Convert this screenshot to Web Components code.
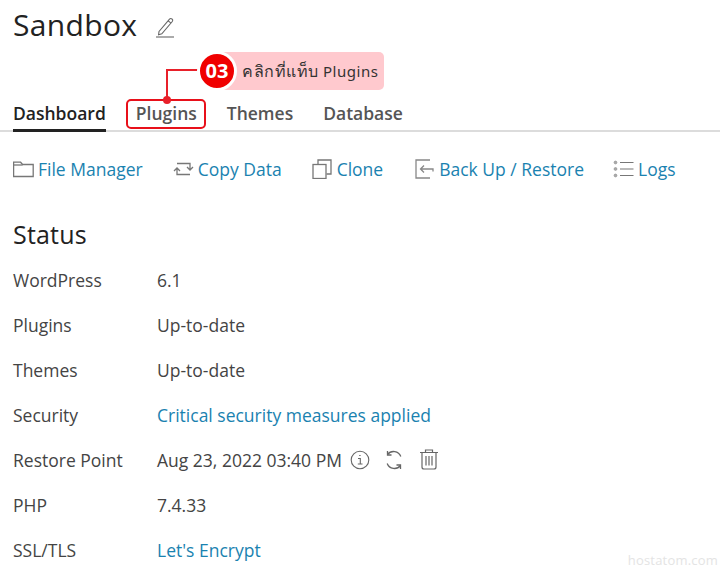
<!DOCTYPE html>
<html><head><meta charset="utf-8"><style>
html,body{margin:0;background:#fff;font-family:"Open Sans",sans-serif;color:#333}
body{width:720px;height:568px;overflow:hidden;position:relative}
</style></head><body>
<template id="t-page"><style>
:host{display:block;padding:0 0 0 13px;height:568px;box-sizing:border-box;position:relative}
.title{display:flex;align-items:center;height:50px;gap:18px}
h1{margin:0;font-size:30px;font-weight:500;line-height:50px;color:#222;letter-spacing:.35px}
.title svg{margin-top:3px}
.tabs{margin-top:44px;margin-left:-13px;padding-left:13px;height:36px;display:flex;border-bottom:2px solid #dcdcdc;box-sizing:content-box}
.toolbar{display:flex;margin-top:23px;height:28px;align-items:center}
h2{margin:34px 0 0;font-size:25px;font-weight:500;line-height:34px;color:#222;letter-spacing:.2px}
.rows{margin-top:6px}
</style>
<div class="title"><h1>Sandbox</h1><svg width="20" height="22" viewBox="0 0 20 22" fill="none" stroke="#666" stroke-width="1.100"><path d="M4 15.500 L14.500 3.200 Q15.600 2 17 3 Q18.400 4.200 17.300 5.500 L6.800 17.800 L3.600 18.800 Z M13.200 4.800 L16 7.200"/><path d="M1 21h18"/></svg></div>
<div class="tabs"><slot name="tabs"></slot></div>
<div class="toolbar"><slot name="tools"></slot></div>
<h2>Status</h2>
<div class="rows"><slot name="rows"></slot></div>
<slot></slot></template>

<template id="t-tab"><style>
:host{display:block;font-size:17.5px;font-weight:600;color:#555;line-height:38px;height:36px;margin-right:30px;box-sizing:border-box}
:host([active]){color:#222;height:38px;border-bottom:3px solid #222}
</style><slot></slot></template>

<template id="t-tool"><style>
:host{display:flex;align-items:center;font-size:17.5px;color:#1a82b0;line-height:28px;gap:4px}
::slotted(svg){display:block;flex:none}
</style><slot name="icon"></slot><slot></slot></template>

<template id="t-row"><style>
:host{display:flex;align-items:center;height:45px;font-size:17.5px;color:#444}
.l{width:144px;flex:none}.v{display:flex;align-items:center}
</style><div class="l"><slot name="label"></slot></div><div class="v"><slot></slot></div></template>

<template id="t-note"><style>
:host{position:absolute;left:0;top:0;width:720px;height:568px;display:block;pointer-events:none}
.frame{position:absolute;left:126px;top:99px;width:80px;height:30px;box-sizing:border-box;border:2px solid #e8101a;border-radius:5px}
.v{position:absolute;left:166px;top:69px;width:2px;height:30px;background:#e8202a}
.h{position:absolute;left:166px;top:69px;width:34px;height:2px;background:#e8202a}
.dot{position:absolute;left:163px;top:96px;width:8px;height:8px;border-radius:50%;background:#e8202a}
.pill{position:absolute;left:222px;top:52px;width:162px;height:38px;background:#ffc9ce;border-radius:0 5px 5px 0;box-sizing:border-box;padding-left:20px;font-family:"Noto Sans",sans-serif;font-size:15px;line-height:38px;color:#333;white-space:nowrap;letter-spacing:.55px}
.th{font-size:16px;letter-spacing:.5px}
.num{position:absolute;left:197px;top:51px;width:40px;height:40px;box-sizing:border-box;border:3px solid #fff;border-radius:50%;background:#f00000;color:#fff;font:700 20px/34px "Open Sans",sans-serif;text-align:center}
</style><div class="frame"></div><div class="v"></div><div class="h"></div><div class="dot"></div><div class="pill"><span class="th">คลิกที่แท็บ</span> Plugins</div><div class="num">03</div></template>

<template id="t-mark"><style>
:host{position:absolute;right:2px;bottom:0;font-size:13px;line-height:16px;color:#e4e4e4;letter-spacing:.2px}
</style><slot></slot></template>

<sb-page>
<sb-tab slot="tabs" active>Dashboard</sb-tab>
<sb-tab slot="tabs">Plugins</sb-tab>
<sb-tab slot="tabs">Themes</sb-tab>
<sb-tab slot="tabs">Database</sb-tab>

<sb-tool slot="tools" style="margin-right:30px"><svg slot="icon" width="21" height="18" viewBox="0 0 21 18" fill="none" stroke="#777" stroke-width="1.300"><path d="M.6 16.500V2.200h7l2 2.300h10.600v12z"/><path d="M.6 5h9"/></svg>File Manager</sb-tool>
<sb-tool slot="tools" style="margin-right:30px"><svg slot="icon" width="21" height="18" viewBox="0 0 21 18" fill="none" stroke="#777" stroke-width="1.300"><path d="M4 3.500h13v6M14 7l3 3 3-3"/><path d="M17 14.500H4v-6M1 11l3-3 3 3"/></svg>Copy Data</sb-tool>
<sb-tool slot="tools" style="margin-right:32px"><svg slot="icon" width="21" height="20" viewBox="0 0 21 20" fill="none" stroke="#777" stroke-width="1.300"><rect x="1" y="5.500" width="13" height="14"/><path d="M6 5V1h13v14h-4.500"/></svg>Clone</sb-tool>
<sb-tool slot="tools" style="margin-right:29px"><svg slot="icon" width="20" height="20" viewBox="0 0 20 20" fill="none" stroke="#888" stroke-width="1.300"><path d="M15 1H1v18h14"/><path d="M18 12.500V10H5.500M9 6.500L5.500 10l3.500 3.500"/></svg>Back Up / Restore</sb-tool>
<sb-tool slot="tools"><svg slot="icon" width="21" height="18" viewBox="0 0 21 18" fill="none" stroke="#777" stroke-width="1.200"><path d="M7 2.500h13.500M7 9h13.500M7 15.500h13.500"/><circle cx="2.500" cy="2.500" r="1.400" fill="#aaa" stroke="#999" stroke-width=".8"/><circle cx="2.500" cy="9" r="1.400" fill="#aaa" stroke="#999" stroke-width=".8"/><circle cx="2.500" cy="15.500" r="1.400" fill="#aaa" stroke="#999" stroke-width=".8"/></svg>Logs</sb-tool>

<sb-row slot="rows"><span slot="label">WordPress</span>6.1</sb-row>
<sb-row slot="rows"><span slot="label">Plugins</span>Up-to-date</sb-row>
<sb-row slot="rows"><span slot="label">Themes</span>Up-to-date</sb-row>
<sb-row slot="rows"><span slot="label">Security</span><span style="color:#1a82b0">Critical security measures applied</span></sb-row>
<sb-row slot="rows"><span slot="label">Restore Point</span>Aug 23, 2022 03:40 PM<svg style="margin-left:8px" width="20" height="20" viewBox="0 0 20 20" fill="none" stroke="#666" stroke-width="1.100"><circle cx="10" cy="10" r="8.800"/><path d="M8 8.500h2.300v5.300M7.800 14h4.700M9.200 5.500h1.400" /></svg><svg style="margin-left:14px" width="20" height="20" viewBox="0 0 20 20" fill="none" stroke="#666" stroke-width="1.300"><path d="M16.800 6.500A7.700 7.700 0 0 0 3.500 4.500"/><path d="M3.200 13.500A7.700 7.700 0 0 0 16.500 15.500"/><path d="M3.500 1v4h4M16.500 19v-4h-4"/></svg><svg style="margin-left:15px" width="20" height="21" viewBox="0 0 20 21" fill="none" stroke="#666" stroke-width="1.200"><path d="M1 3.500h18M6.500 3.500V1h7v2.500M3 3.500V18q0 2 2 2h10q2 0 2-2V3.500M7 7v9.500M10 7v9.500M13 7v9.500"/></svg></sb-row>
<sb-row slot="rows"><span slot="label">PHP</span>7.4.33</sb-row>
<sb-row slot="rows"><span slot="label">SSL/TLS</span><span style="color:#1a82b0">Let's Encrypt</span></sb-row>
</sb-page>
<sb-note></sb-note>
<sb-mark>hostatom.com</sb-mark>
<script>
for (const [name,id] of [['sb-page','t-page'],['sb-tab','t-tab'],['sb-tool','t-tool'],['sb-row','t-row'],['sb-note','t-note'],['sb-mark','t-mark']]) {
  customElements.define(name, class extends HTMLElement {
    constructor(){super();this.attachShadow({mode:'open'}).appendChild(document.getElementById(id).content.cloneNode(true));}
  });
}
</script>
</body></html>
